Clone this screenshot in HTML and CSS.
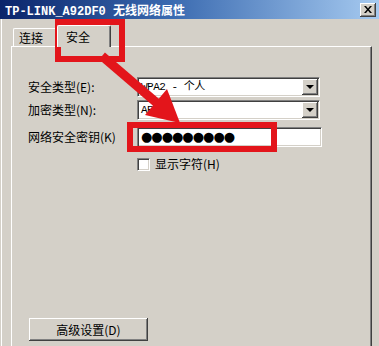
FILE: index.html
```html
<!DOCTYPE html>
<html lang="zh-CN">
<head>
    <meta charset="UTF-8">
    <meta name="viewport" content="width=device-width, initial-scale=1.0">
    <title>TP-LINK_A92DF0 无线网络属性</title>
    <link rel="stylesheet" href="styles.css">
</head>
<body>
    <div class="window">
        <div class="titlebar">
            <span class="title">TP-LINK_A92DF0 无线网络属性</span>
            <span class="close">
                <svg width="8" height="7" viewBox="0 0 8 7"><path d="M0 0h2l2 2.5L6 0h2L5 3.5 8 7H6L4 4.5 2 7H0l3-3.5z" fill="#000"/></svg>
            </span>
        </div>

        <div class="content">
            <div class="tabs">
                <div class="tab">连接</div>
                <div class="tab active">安全</div>
            </div>

            <div class="panel">
                <div class="row">
                    <span class="label">安全类型(E):</span>
                    <div class="combo">
                        <span class="value">WPA2 - 个人</span>
                        <span class="drop"><i></i></span>
                    </div>
                </div>
                <div class="row">
                    <span class="label">加密类型(N):</span>
                    <div class="combo">
                        <span class="value">AES</span>
                        <span class="drop"><i></i></span>
                    </div>
                </div>
                <div class="row row-key">
                    <span class="label">网络安全密钥(K)</span>
                    <div class="field">
                        <span class="dots">●●●●●●●●●</span>
                    </div>
                </div>
                <div class="check-row">
                    <span class="checkbox"></span>
                    <span class="check-label">显示字符(H)</span>
                </div>

                <button class="btn">高级设置(D)</button>
            </div>
        </div>

        <!-- red annotations drawn over the dialog -->
        <svg class="marks" width="379" height="346" viewBox="0 0 379 346">
            <rect x="58" y="22" width="64" height="37" fill="none" stroke="#e3151b" stroke-width="6"/>
            <rect x="130" y="125" width="144" height="24" fill="none" stroke="#e3151b" stroke-width="6"/>
            <line x1="102" y1="56" x2="158" y2="104" stroke="#e3151b" stroke-width="9"/>
            <polygon points="180,123 167,89 145,115" fill="#e3151b"/>
        </svg>
    </div>
</body>
</html>
```

FILE: styles.css
```css
* {
    margin: 0;
    padding: 0;
    box-sizing: border-box;
}

body {
    width: 379px;
    height: 346px;
    overflow: hidden;
    background: #d4d0c8;
    font-family: "Noto Sans CJK SC", "Liberation Sans", sans-serif;
    font-size: 12px;
    color: #000;
}

.window {
    position: relative;
    width: 379px;
    height: 346px;
    overflow: hidden;
    background: #d4d0c8;
    box-shadow: inset 1px 0 #d4d0c8, inset 2px 0 #fff;
}

.titlebar {
    height: 19px;
    display: flex;
    align-items: center;
    justify-content: space-between;
    padding: 0 3px 0 5px;
    background: linear-gradient(90deg, #0a246a 0%, #3a6ab0 45%, #a6caf0 100%);
    color: #fff;
    font-family: "Liberation Mono", "Noto Sans CJK SC", monospace;
    font-size: 12px;
    font-weight: 700;
}

.close {
    width: 16px;
    height: 14px;
    display: flex;
    align-items: center;
    justify-content: center;
    background: #d4d0c8;
    box-shadow:
        inset -1px -1px #404040,
        inset 1px 1px #fff,
        inset -2px -2px #808080;
}

.content {
    padding: 6px 7px 0 11px;
}

.tabs {
    height: 21px;
    display: flex;
    align-items: flex-end;
    padding-left: 2px;
}

.tab {
    height: 18px;
    width: 46px;
    padding: 1px 0 0 5px;
    line-height: 16px;
    background: #d4d0c8;
    border-top: 1px solid #fff;
    border-left: 1px solid #fff;
    border-right: 1px solid #404040;
    border-radius: 2px 2px 0 0;
    box-shadow: inset -1px 0 #808080;
}

.tab.active {
    position: relative;
    z-index: 1;
    width: 54px;
    height: 22px;
    margin: 0 0 -1px -2px;
    padding: 3px 0 0 8px;
}

.panel {
    width: 361px;
    height: 300px;
    padding: 30px 0 0 16px;
    border-top: 1px solid #fff;
    border-left: 1px solid #fff;
    border-right: 1px solid #404040;
    box-shadow: inset -1px 0 #808080;
    display: flex;
    flex-direction: column;
    align-items: flex-start;
}

.row {
    display: flex;
    align-items: center;
    margin-bottom: 3px;
}

.row-key {
    margin-top: 4px;
}

.label {
    width: 109px;
    line-height: 16px;
}

.combo,
.field {
    height: 20px;
    display: flex;
    align-items: center;
    justify-content: space-between;
    background: #fff;
    border-top: 1px solid #808080;
    border-left: 1px solid #808080;
    border-right: 1px solid #fff;
    border-bottom: 1px solid #fff;
    box-shadow: inset 1px 1px #404040, inset -1px -1px #d4d0c8;
}

.combo {
    width: 183px;
    padding: 0 1px 0 3px;
}

.field {
    width: 185px;
    padding-left: 3px;
}

.value {
    font-family: "Liberation Mono", "Noto Sans CJK SC", monospace;
    font-size: 11px;
    line-height: 16px;
    letter-spacing: -0.5px;
}

.drop {
    width: 16px;
    height: 16px;
    display: flex;
    align-items: center;
    justify-content: center;
    background: #d4d0c8;
    box-shadow:
        inset -1px -1px #404040,
        inset 1px 1px #fff,
        inset -2px -2px #808080;
}

.drop i {
    width: 0;
    height: 0;
    border-left: 4px solid transparent;
    border-right: 4px solid transparent;
    border-top: 4px solid #000;
}

.dots {
    font-family: "DejaVu Sans", sans-serif;
    font-size: 13px;
    line-height: 16px;
    letter-spacing: -1px;
}

.check-row {
    display: flex;
    align-items: center;
    margin: 7px 0 0 109px;
}

.checkbox {
    width: 13px;
    height: 13px;
    background: #fff;
    border-top: 1px solid #808080;
    border-left: 1px solid #808080;
    border-right: 1px solid #fff;
    border-bottom: 1px solid #fff;
    box-shadow: inset 1px 1px #404040, inset -1px -1px #d4d0c8;
}

.check-label {
    margin-left: 5px;
    line-height: 14px;
}

.btn {
    width: 119px;
    height: 23px;
    margin: 147px 0 0 1px;
    font-family: "Noto Sans CJK SC", sans-serif;
    font-size: 12px;
    background: #d4d0c8;
    border: none;
    box-shadow:
        inset -1px -1px #404040,
        inset 1px 1px #fff,
        inset -2px -2px #808080;
}

.marks {
    position: absolute;
    top: 0;
    left: 0;
    pointer-events: none;
}
```
